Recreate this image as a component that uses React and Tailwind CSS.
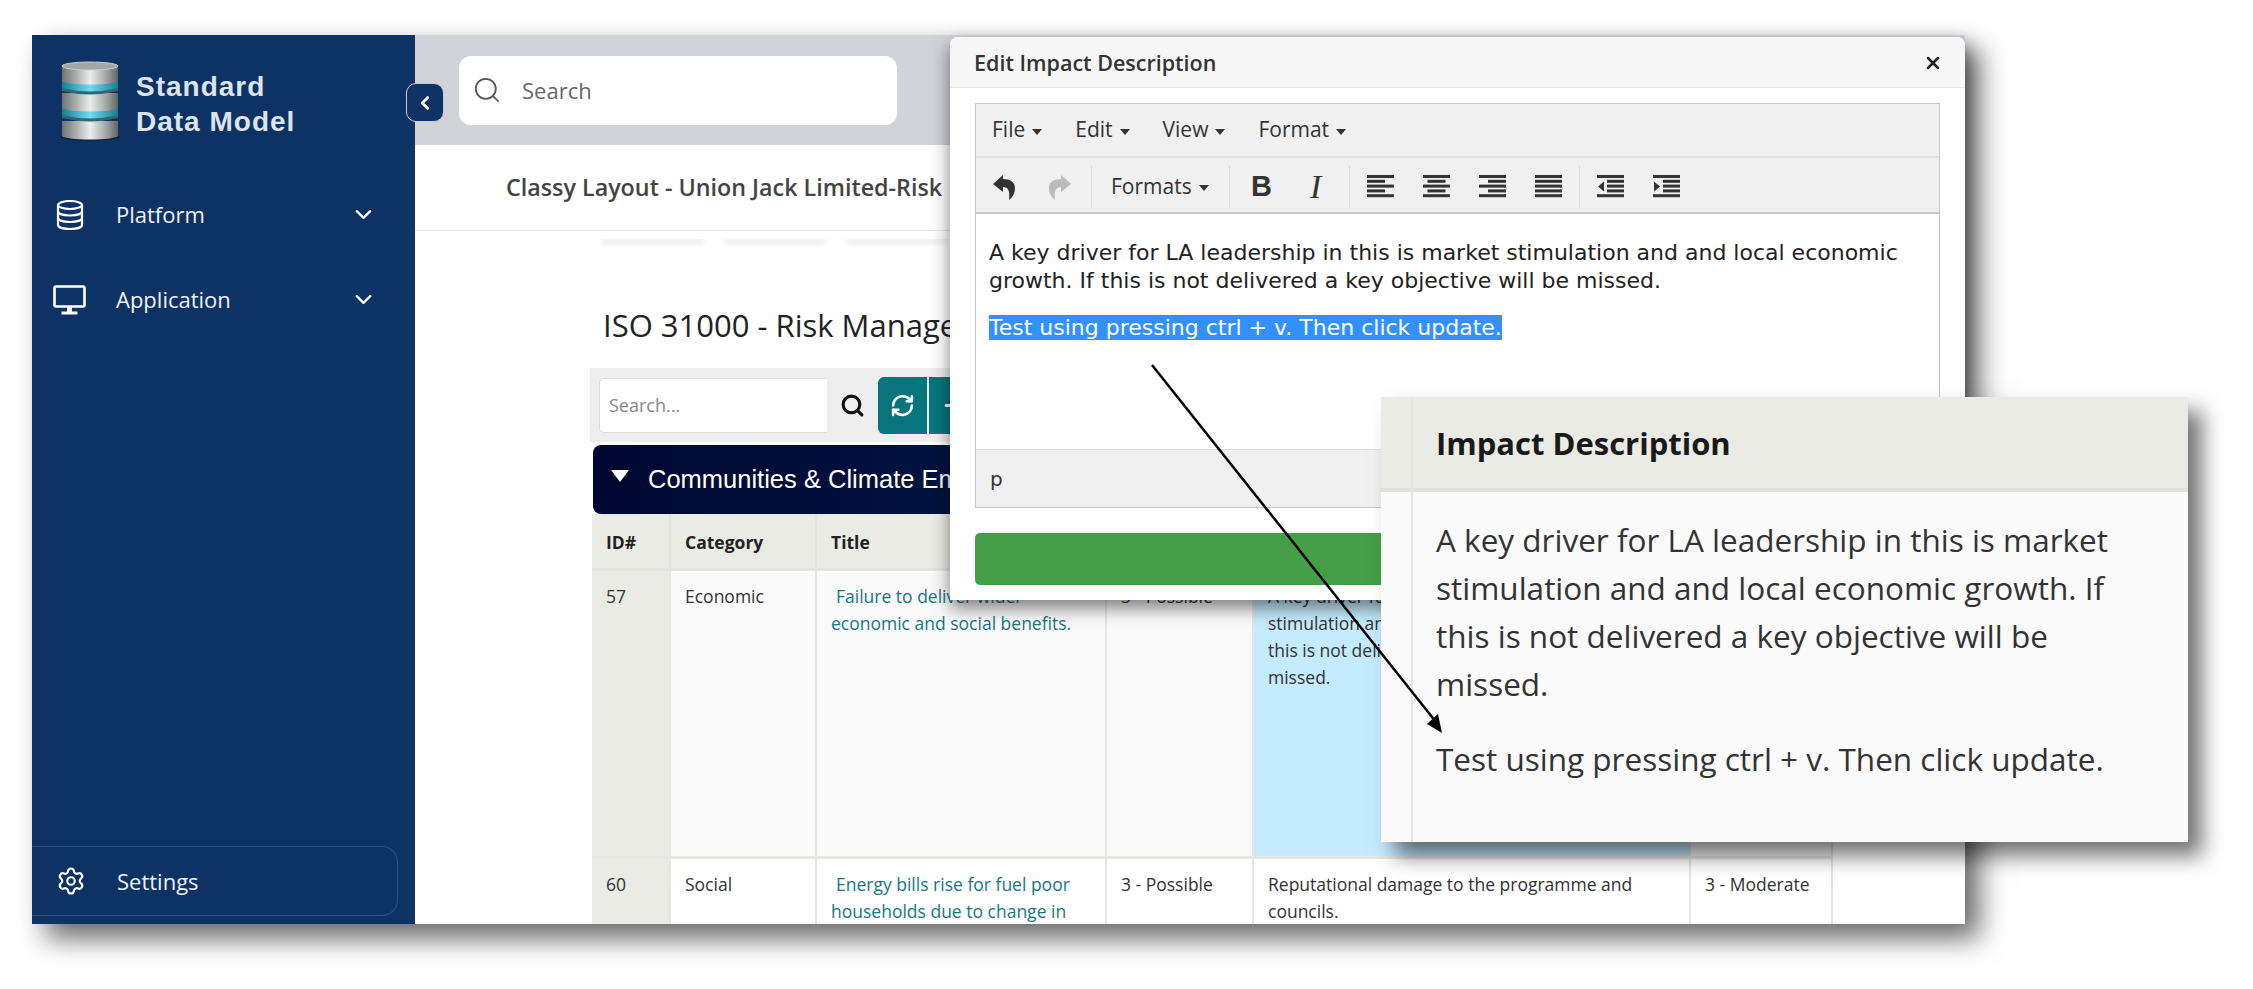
import React from "react";
import { Search, Settings, ChevronDown, ChevronLeft, RefreshCw, X, Plus } from "lucide-react";

const sans = "font-['Open_Sans',sans-serif]";

function Logo() {
  const disc = (y, h) => (
    <g key={y}>
      <rect x="2" y={y} width="56" height={h} fill="url(#metal)" />
      <ellipse cx="30" cy={y + h} rx="28" ry="3.5" fill="url(#metal)" />
    </g>
  );
  return (
    <svg width="66" height="80" viewBox="0 0 60 80" className="shrink-0">
      <defs>
        <linearGradient id="metal" x1="0" x2="1" y1="0" y2="0">
          <stop offset="0" stopColor="#6d7472" />
          <stop offset="0.25" stopColor="#a9aeac" />
          <stop offset="0.5" stopColor="#eceeed" />
          <stop offset="0.8" stopColor="#9ea3a1" />
          <stop offset="1" stopColor="#5f6664" />
        </linearGradient>
        <linearGradient id="glow" x1="0" x2="1" y1="0" y2="0">
          <stop offset="0" stopColor="#117f96" />
          <stop offset="0.5" stopColor="#6fdcf2" />
          <stop offset="1" stopColor="#127f98" />
        </linearGradient>
      </defs>
      <ellipse cx="30" cy="76" rx="30" ry="3.5" fill="#0a1d33" />
      {disc(60, 15)}
      <path d="M2 50h56v7q-28 7-56 0z" fill="#37666f" />
      <path d="M2 47h56v7q-28 7-56 0z" fill="url(#glow)" />
      {disc(32, 15)}
      <path d="M2 23h56v7q-28 7-56 0z" fill="#37666f" />
      <path d="M2 20h56v7q-28 7-56 0z" fill="url(#glow)" />
      {disc(5, 15)}
      <ellipse cx="30" cy="5" rx="28" ry="4" fill="#a3a8a6" stroke="#c9cdcb" strokeWidth="1" />
    </svg>
  );
}

function DbIcon() {
  return (
    <svg width="28" height="30" viewBox="0 0 28 30" fill="none" stroke="currentColor" strokeWidth="2.2">
      <ellipse cx="14" cy="5" rx="12" ry="4" />
      <path d="M2 5v20c0 2.4 5.4 4 12 4s12-1.6 12-4V5" />
      <path d="M2 11.5c0 2.4 5.4 4 12 4s12-1.6 12-4" />
      <path d="M2 18c0 2.4 5.4 4 12 4s12-1.6 12-4" />
    </svg>
  );
}

function ScreenIcon() {
  return (
    <svg width="33" height="30" viewBox="0 0 33 30" fill="none" className="-ml-[3px]">
      <rect x="1.5" y="1.5" width="30" height="20" rx="1.5" stroke="currentColor" strokeWidth="2.6" />
      <rect x="14" y="22" width="5" height="5" fill="currentColor" />
      <rect x="8.5" y="26.5" width="16" height="3" fill="currentColor" />
    </svg>
  );
}

function SideItem({ icon, label }) {
  return (
    <div className="flex items-center h-[85px] pl-[24px] pr-[38px] text-white">
      <div className="w-[60px] shrink-0">{icon}</div>
      <span className="flex-1 text-[22px] text-[#eef2f7]">{label}</span>
      <ChevronDown size={27} strokeWidth={2} />
    </div>
  );
}

function Sidebar() {
  return (
    <aside className={`w-[383px] shrink-0 h-full bg-[#0e3263] flex flex-col ${sans}`}>
      <div className="flex items-center gap-[13px] pl-[25px] pt-[26px]">
        <Logo />
        <div className="pt-[5px] font-['Liberation_Sans',sans-serif] font-bold text-[28px] leading-[35px] tracking-[1px] text-[#dbe4ef]">
          Standard
          <br />
          Data Model
        </div>
      </div>
      <div className="mt-[31px]">
        <SideItem icon={<DbIcon />} label="Platform" />
        <SideItem icon={<ScreenIcon />} label="Application" />
      </div>
      <div className="mt-auto mb-[8px] h-[70px] w-[366px] flex items-center pl-[24px] border border-l-0 border-[#2f5080] rounded-r-[16px] text-white">
        <Settings size={30} strokeWidth={1.7} className="mr-[31px]" />
        <span className="text-[22px] text-[#eef2f7]">Settings</span>
      </div>
    </aside>
  );
}

function Th({ children, className = "" }) {
  return <th className={`bg-[#ebebe6] border-r-2 border-b-[3px] border-[#e3e3df] px-[14px] pt-[2px] text-left align-middle font-bold text-[#222] ${className}`}>{children}</th>;
}

function Td({ children, className = "" }) {
  return <td className={`border-r-2 border-b-[3px] border-[#e6e6e3] pl-[14px] pr-[10px] pt-[12px] align-top leading-[27px] text-[#333] ${className}`}>{children}</td>;
}

function RiskTable() {
  return (
    <table className="table-fixed border-collapse ml-[2px] w-[1240px] text-[17.5px]">
      <colgroup>
        <col className="w-[78px]" />
        <col className="w-[146px]" />
        <col className="w-[290px]" />
        <col className="w-[147px]" />
        <col className="w-[437px]" />
        <col className="w-[142px]" />
      </colgroup>
      <thead>
        <tr className="h-[55px]">
          <Th>ID#</Th>
          <Th>Category</Th>
          <Th>Title</Th>
          <Th>Likelihood</Th>
          <Th>Impact Description</Th>
          <Th>Impact</Th>
        </tr>
      </thead>
      <tbody>
        <tr className="h-[288px] bg-[#fafafa]">
          <Td className="bg-[#ebebe6]">57</Td>
          <Td>Economic</Td>
          <Td className="text-[#17777f]">
            <span className="pl-[5px]">Failure to deliver wider</span> economic and social benefits.
          </Td>
          <Td>3 - Possible</Td>
          <Td className="bg-[#c4ecfe] !pr-[30px]">
            A key driver for LA leadership in this is market
            <br />
            stimulation and and local economic growth. If
            <br />
            this is not delivered a key objective will be
            <br />
            missed.
          </Td>
          <Td>3 - Moderate</Td>
        </tr>
        <tr className="bg-white">
          <Td className="bg-[#ebebe6]">60</Td>
          <Td>Social</Td>
          <Td className="text-[#17777f]">
            <span className="pl-[5px]">Energy bills rise for fuel poor</span> households due to change in
          </Td>
          <Td>3 - Possible</Td>
          <Td>Reputational damage to the programme and councils.</Td>
          <Td>3 - Moderate</Td>
        </tr>
      </tbody>
    </table>
  );
}

function MainArea() {
  return (
    <main className={`relative flex-1 min-w-0 h-full bg-white ${sans}`}>
      <div className="h-[110px] bg-[#d1d3d8] flex items-center pl-[44px]">
        <div className="w-[438px] h-[69px] bg-white rounded-[12px] flex items-center pl-[13px] text-[#555]">
          <Search size={30} strokeWidth={1.4} className="mr-[20px]" />
          <span className="text-[22px] text-[#666]">Search</span>
        </div>
      </div>
      <div className="h-[86px] border-b border-[#e8e8e8] flex items-center pl-[91px]">
        <span className="font-semibold text-[23.3px] text-[#444] whitespace-nowrap">Classy Layout - Union Jack Limited-Risk</span>
      </div>
      <div className="flex gap-[14px] pl-[184px]">
        <div className="w-[108px] h-[8px] shadow-[0_6px_6px_-3px_rgba(0,0,0,0.22)]" />
        <div className="w-[108px] h-[8px] shadow-[0_6px_6px_-3px_rgba(0,0,0,0.22)]" />
        <div className="w-[108px] h-[8px] shadow-[0_6px_6px_-3px_rgba(0,0,0,0.22)]" />
      </div>
      <div className="pl-[175px]">
        <h1 className="mt-[64px] ml-[13px] text-[31px] leading-[44px] text-[#222] whitespace-nowrap">ISO 31000 - Risk Management</h1>
        <div className="mt-[21px] h-[74px] w-[1242px] bg-[#eeeeee] flex items-center pl-[9px]">
          <div className="w-[228px] h-[55px] bg-white border border-[#ddd] border-r-0 rounded-l-[5px] flex items-center pl-[9px] text-[18px] text-[#888]">Search...</div>
          <Search size={25} strokeWidth={3} className="ml-[13px] text-[#111]" />
          <div className="ml-[13px] w-[49px] h-[57px] bg-[#08757c] rounded-l-[6px] flex items-center justify-center text-white">
            <RefreshCw size={25} strokeWidth={2.4} />
          </div>
          <div className="ml-[2px] w-[49px] h-[57px] bg-[#08757c] flex items-center justify-center text-white">
            <Plus size={25} strokeWidth={3} />
          </div>
        </div>
        <div className="ml-[3px] mt-[3px] h-[69px] w-[1239px] rounded-[8px] bg-gradient-to-r from-[#000730] to-[#0e3263] flex items-center pl-[18px] text-white font-['Liberation_Sans',sans-serif] text-[25.5px]">
          <span className="mr-[19px] -mt-[7px] border-x-[9px] border-t-[12px] border-x-transparent border-t-white" />
          Communities &amp; Climate Emergency
        </div>
        <RiskTable />
      </div>
    </main>
  );
}

function AlignIcon({ kind }) {
  const rows = {
    left: [[0, 27], [0, 18], [0, 27], [0, 18], [0, 27]],
    center: [[0, 27], [4.5, 18], [0, 27], [4.5, 18], [0, 27]],
    right: [[0, 27], [9, 18], [0, 27], [9, 18], [0, 27]],
    full: [[0, 27], [0, 27], [0, 27], [0, 27], [0, 27]],
  }[kind];
  return (
    <svg width="27" height="23" viewBox="0 0 27 23" fill="#333">
      {rows.map((r, i) => (
        <rect key={i} x={r[0]} y={i * 4.8} width={r[1]} height="3" />
      ))}
    </svg>
  );
}

function IndentIcon({ out }) {
  return (
    <svg width="27" height="23" viewBox="0 0 27 23" fill="#333">
      <rect x="0" y="0" width="27" height="3" />
      <rect x="10" y="4.8" width="17" height="3" />
      <rect x="10" y="9.6" width="17" height="3" />
      <rect x="10" y="14.4" width="17" height="3" />
      <rect x="0" y="19.2" width="27" height="3" />
      {out ? <path d="M7 6.5v10l-6-5z" /> : <path d="M1 6.5v10l6-5z" />}
    </svg>
  );
}

function ReplyIcon({ flip, color }) {
  return (
    <svg width="24" height="28" viewBox="0 0 24 28" fill={color} className={flip ? "-scale-x-100" : ""}>
      <path d="M11 2 1 11l10 8v-5c5 0 7 3 6 13 4-3 6-7 6-12 0-6-5-9-12-9z" />
    </svg>
  );
}

function Caret() {
  return <span className="ml-[7px] inline-block border-x-[5px] border-t-[6px] border-x-transparent border-t-[#333] align-middle" />;
}

function Sep() {
  return <div className="w-px h-[42px] bg-[#dcdcdc]" />;
}

function EditImpactModal() {
  return (
    <div className={`absolute left-[950px] top-[37px] w-[1015px] h-[563px] bg-white rounded-t-[8px] shadow-[0_8px_18px_rgba(0,0,0,0.5)] ${sans}`}>
      <div className="h-[51px] bg-[#f7f7f7] border-b border-[#e7e7e7] rounded-t-[8px] flex items-center justify-between pl-[24px] pr-[22px] pt-[2px]">
        <span className="font-semibold text-[21.5px] text-[#333]">Edit Impact Description</span>
        <X size={20} strokeWidth={3} className="text-[#222]" />
      </div>
      <div className="mx-[25px] mt-[15px] h-[405px] border border-[#c5c5c5] flex flex-col">
        <div className="h-[54px] bg-[#f0f0f0] border-b-2 border-[#e2e2e2] flex items-center pl-[16px] gap-[33px] text-[21px] text-[#333]">
          <span>File<Caret /></span>
          <span>Edit<Caret /></span>
          <span>View<Caret /></span>
          <span>Format<Caret /></span>
        </div>
        <div className="h-[56px] bg-[#f0f0f0] border-b-2 border-[#c9c9c9] flex items-center pt-[3px] text-[21px] text-[#333]">
          <div className="w-[115px] flex items-center gap-[32px] pl-[16px]">
            <ReplyIcon color="#333" />
            <ReplyIcon flip color="#bbb" />
          </div>
          <Sep />
          <div className="w-[137px] pl-[19px] whitespace-nowrap">Formats<Caret /></div>
          <Sep />
          <div className="w-[119px] flex items-center gap-[38px] pl-[21px]">
            <span className="font-['Liberation_Sans',sans-serif] font-bold text-[29px] leading-none">B</span>
            <span className="font-['Liberation_Serif',serif] italic text-[34px] leading-none">I</span>
          </div>
          <Sep />
          <div className="w-[229px] flex items-center gap-[29px] pl-[17px]">
            <AlignIcon kind="left" />
            <AlignIcon kind="center" />
            <AlignIcon kind="right" />
            <AlignIcon kind="full" />
          </div>
          <Sep />
          <div className="flex items-center gap-[29px] pl-[17px]">
            <IndentIcon out />
            <IndentIcon />
          </div>
        </div>
        <div className="flex-1 pt-[25px] pl-[13px] font-['DejaVu_Sans',sans-serif] text-[22px] leading-[27.5px] text-[#222] whitespace-nowrap">
          <p>
            A key driver for LA leadership in this is market stimulation and and local economic
            <br />
            growth. If this is not delivered a key objective will be missed.
          </p>
          <p className="mt-[20px]">
            <span className="bg-[#3390ff] text-white">Test using pressing ctrl + v. Then click update.</span>
          </p>
        </div>
        <div className="h-[58px] bg-[#f0f0f0] border-t border-[#dcdcdc] flex items-center pl-[14px] font-['DejaVu_Sans',sans-serif] text-[20px] text-[#333]">p</div>
      </div>
      <div className="mx-[25px] mt-[25px] h-[52px] bg-[#469e48] rounded-[5px]" />
    </div>
  );
}

function Callout() {
  return (
    <div className={`absolute left-[1381px] top-[397px] w-[807px] h-[445px] bg-[#fafafa] shadow-[14px_14px_20px_rgba(0,0,0,0.55)] flex ${sans}`}>
      <div className="w-[32px] shrink-0 border-r-2 border-[#e4e4e1]">
        <div className="h-[95px] bg-[#ebebe6] border-b-[4px] border-[#e0e0dc]" />
      </div>
      <div className="flex-1">
        <div className="h-[95px] bg-[#ebebe6] border-b-[4px] border-[#e0e0dc] flex items-center pl-[23px] pt-[2px] font-bold text-[31px] text-[#1a1a1a]">Impact Description</div>
        <div className="pl-[23px] pr-[50px] pt-[24px] text-[31.5px] leading-[48px] text-[#333]">
          <p>
            A key driver for LA leadership in this is market
            <br />
            stimulation and and local economic growth. If
            <br />
            this is not delivered a key objective will be
            <br />
            missed.
          </p>
          <p className="mt-[27px]">Test using pressing ctrl + v. Then click update.</p>
        </div>
      </div>
    </div>
  );
}

function Arrow() {
  return (
    <svg className="absolute left-0 top-0 pointer-events-none" width="2253" height="989">
      <line x1="1152" y1="365" x2="1436" y2="722" stroke="#000" strokeWidth="2.5" />
      <path d="M1442 733 1427 724 1438 714z" fill="#000" />
    </svg>
  );
}

export default function App() {
  return (
    <div className="relative w-[2253px] h-[989px] bg-white overflow-hidden pl-[32px] pt-[35px]">
      <div className="w-[1933px] h-[889px] flex overflow-hidden shadow-[14px_14px_26px_rgba(0,0,0,0.6)]">
        <Sidebar />
        <MainArea />
      </div>
      <div className="absolute left-[406px] top-[83px] w-[38px] h-[39px] bg-[#0e3263] border border-[#c5ccd6] rounded-[10px] flex items-center justify-center text-white">
        <ChevronLeft size={22} strokeWidth={3} />
      </div>
      <EditImpactModal />
      <Callout />
      <Arrow />
    </div>
  );
}
